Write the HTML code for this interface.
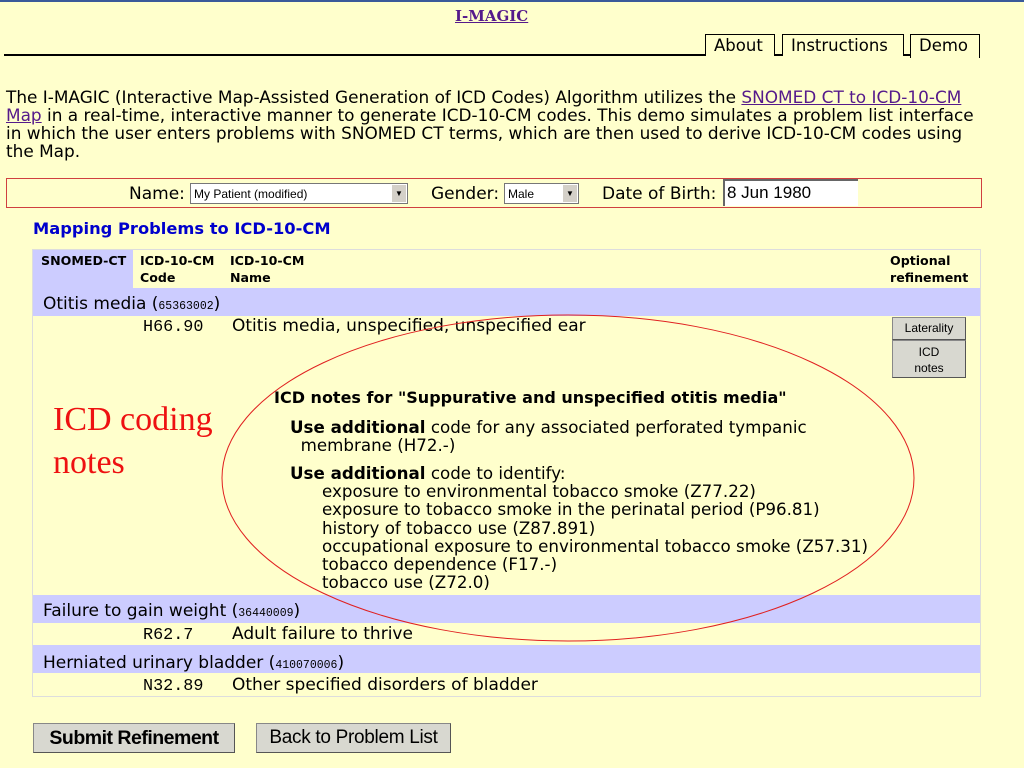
<!DOCTYPE html>
<html><head><meta charset="utf-8"><style>
*{margin:0;padding:0;box-sizing:border-box}
body{width:1024px;height:768px;background:#ffffcc;font-family:"DejaVu Sans","Liberation Sans",sans-serif;font-size:17px;color:#000;position:relative;overflow:hidden}
.a{position:absolute;white-space:nowrap}
a{color:#551a8b}
.mono{font-family:"Liberation Mono",monospace;font-size:16.8px}
.sm{font-family:"Liberation Mono",monospace;font-size:11.5px}
.tab{position:absolute;top:34px;height:22px;border:1px solid #000;border-bottom:none;background:#ffffcc;font-size:16.5px;padding:0 8px 0;line-height:21px}
.lil{position:absolute;left:33px;width:947px;background:#ccccff}
.btn{position:absolute;background:#d8d8d0;border:1px solid #888;border-right-color:#555;border-bottom-color:#555;font-family:"Liberation Sans",sans-serif;text-align:center}
</style></head><body>
<div style="position:absolute;left:0;top:0;width:1024px;height:2px;background:#3a5a9a"></div>
<div class="a" style="left:455px;top:7px;font-family:'DejaVu Serif',serif;font-weight:bold;font-size:15px"><a href="#">I-MAGIC</a></div>
<div style="position:absolute;left:4px;top:54px;width:976px;height:2px;background:#000"></div>
<div class="tab" style="left:705px;width:70px">About</div>
<div class="tab" style="left:782px;width:122px">Instructions</div>
<div class="tab" style="left:910px;width:70px;height:24px">Demo</div>
<div class="a" style="left:6px;top:88px;line-height:18px;font-size:16.9px">The I-MAGIC (Interactive Map-Assisted Generation of ICD Codes) Algorithm utilizes the <a href="#">SNOMED CT to ICD-10-CM</a><br><a href="#">Map</a> in a real-time, interactive manner to generate ICD-10-CM codes. This demo simulates a problem list interface<br>in which the user enters problems with SNOMED CT terms, which are then used to derive ICD-10-CM codes using<br>the Map.</div>
<div style="position:absolute;left:6px;top:178px;width:976px;height:30px;border:1px solid #d04040"></div>
<div class="a" style="left:129px;top:184px">Name:</div>
<div style="position:absolute;left:190px;top:183px;width:218px;height:21px;background:#fff;border:1px solid #777;font-family:'Liberation Sans',sans-serif;font-size:12px;padding:3px 3px">My Patient (modified)<span style="position:absolute;right:1px;top:1px;width:14px;height:17px;background:#d4d0c8;font-size:8px;text-align:center;line-height:17px">▼</span></div>
<div class="a" style="left:431px;top:184px">Gender:</div>
<div style="position:absolute;left:504px;top:183px;width:75px;height:21px;background:#fff;border:1px solid #777;font-family:'Liberation Sans',sans-serif;font-size:12px;padding:3px 3px">Male<span style="position:absolute;right:1px;top:1px;width:14px;height:17px;background:#d4d0c8;font-size:8px;text-align:center;line-height:17px">▼</span></div>
<div class="a" style="left:602px;top:184px">Date of Birth:</div>
<div style="position:absolute;left:723px;top:179px;width:135px;height:27px;background:#fff;border-top:2px solid #666;border-left:2px solid #666;font-family:'Liberation Sans',sans-serif;font-size:17px;padding:2px 2px">8 Jun 1980</div>
<div class="a" style="left:33px;top:219px;color:#0000cc;font-weight:bold;font-size:16.3px">Mapping Problems to ICD-10-CM</div>
<div style="position:absolute;left:32px;top:249px;width:949px;height:448px;border:1px solid #ddd"></div>
<div style="position:absolute;left:33px;top:250px;width:100px;height:38px;background:#ccccff"></div>
<div class="a" style="left:41px;top:252px;font-weight:bold;font-size:12.6px;line-height:17px">SNOMED-CT</div>
<div class="a" style="left:140px;top:252px;font-weight:bold;font-size:12.6px;line-height:17px">ICD-10-CM<br>Code</div>
<div class="a" style="left:230px;top:252px;font-weight:bold;font-size:12.6px;line-height:17px">ICD-10-CM<br>Name</div>
<div class="a" style="left:890px;top:252px;font-weight:bold;font-size:12.6px;line-height:17px">Optional<br>refinement</div>
<div class="lil" style="top:288px;height:28px"></div>
<div class="a" style="left:43px;top:294px">Otitis media (<span class="sm">65363002</span>)</div>
<div class="a mono" style="left:143px;top:318px">H66.90</div>
<div class="a" style="left:232px;top:316px">Otitis media, unspecified, unspecified ear</div>
<div class="btn" style="left:892px;top:317px;width:74px;height:23px;font-size:12px;line-height:21px">Laterality</div>
<div class="btn" style="left:892px;top:340px;width:74px;height:38px;font-size:12px;line-height:16px;padding-top:3px">ICD<br>notes</div>
<div class="a" style="left:274px;top:388px;font-weight:bold;font-size:16px">ICD notes for "Suppurative and unspecified otitis media"</div>
<div class="a" style="left:290px;top:418px;line-height:18px;font-size:16.7px"><b>Use additional</b> code for any associated perforated tympanic<br>&nbsp;&nbsp;membrane (H72.-)</div>
<div class="a" style="left:290px;top:464px;line-height:18px;font-size:16.7px"><b>Use additional</b> code to identify:</div>
<div class="a" style="left:322px;top:482px;line-height:18.3px;font-size:16.7px">exposure to environmental tobacco smoke (Z77.22)<br>exposure to tobacco smoke in the perinatal period (P96.81)<br>history of tobacco use (Z87.891)<br>occupational exposure to environmental tobacco smoke (Z57.31)<br>tobacco dependence (F17.-)<br>tobacco use (Z72.0)</div>
<div class="a" style="left:53px;top:398px;color:#ee1111;font-family:'Liberation Serif',serif;font-size:34px;line-height:43px">ICD coding<br>notes</div>
<div class="lil" style="top:595px;height:28px"></div>
<div class="a" style="left:43px;top:601px">Failure to gain weight (<span class="sm">36440009</span>)</div>
<div class="a mono" style="left:143px;top:626px">R62.7</div>
<div class="a" style="left:232px;top:624px">Adult failure to thrive</div>
<div class="lil" style="top:645px;height:28px"></div>
<div class="a" style="left:43px;top:653px">Herniated urinary bladder (<span class="sm">410070006</span>)</div>
<div class="a mono" style="left:143px;top:677px">N32.89</div>
<div class="a" style="left:232px;top:675px">Other specified disorders of bladder</div>
<svg style="position:absolute;left:0;top:0" width="1024" height="768"><ellipse cx="568" cy="478" rx="346" ry="163" fill="none" stroke="#e02020" stroke-width="1"/></svg>
<div class="btn" style="left:33px;top:723px;width:202px;height:30px;font-weight:bold;font-size:19.5px;line-height:28px;letter-spacing:-0.5px">Submit Refinement</div>
<div class="btn" style="left:256px;top:723px;width:195px;height:30px;font-size:19px;line-height:28px;letter-spacing:-0.3px">Back to Problem List</div>
</body></html>
